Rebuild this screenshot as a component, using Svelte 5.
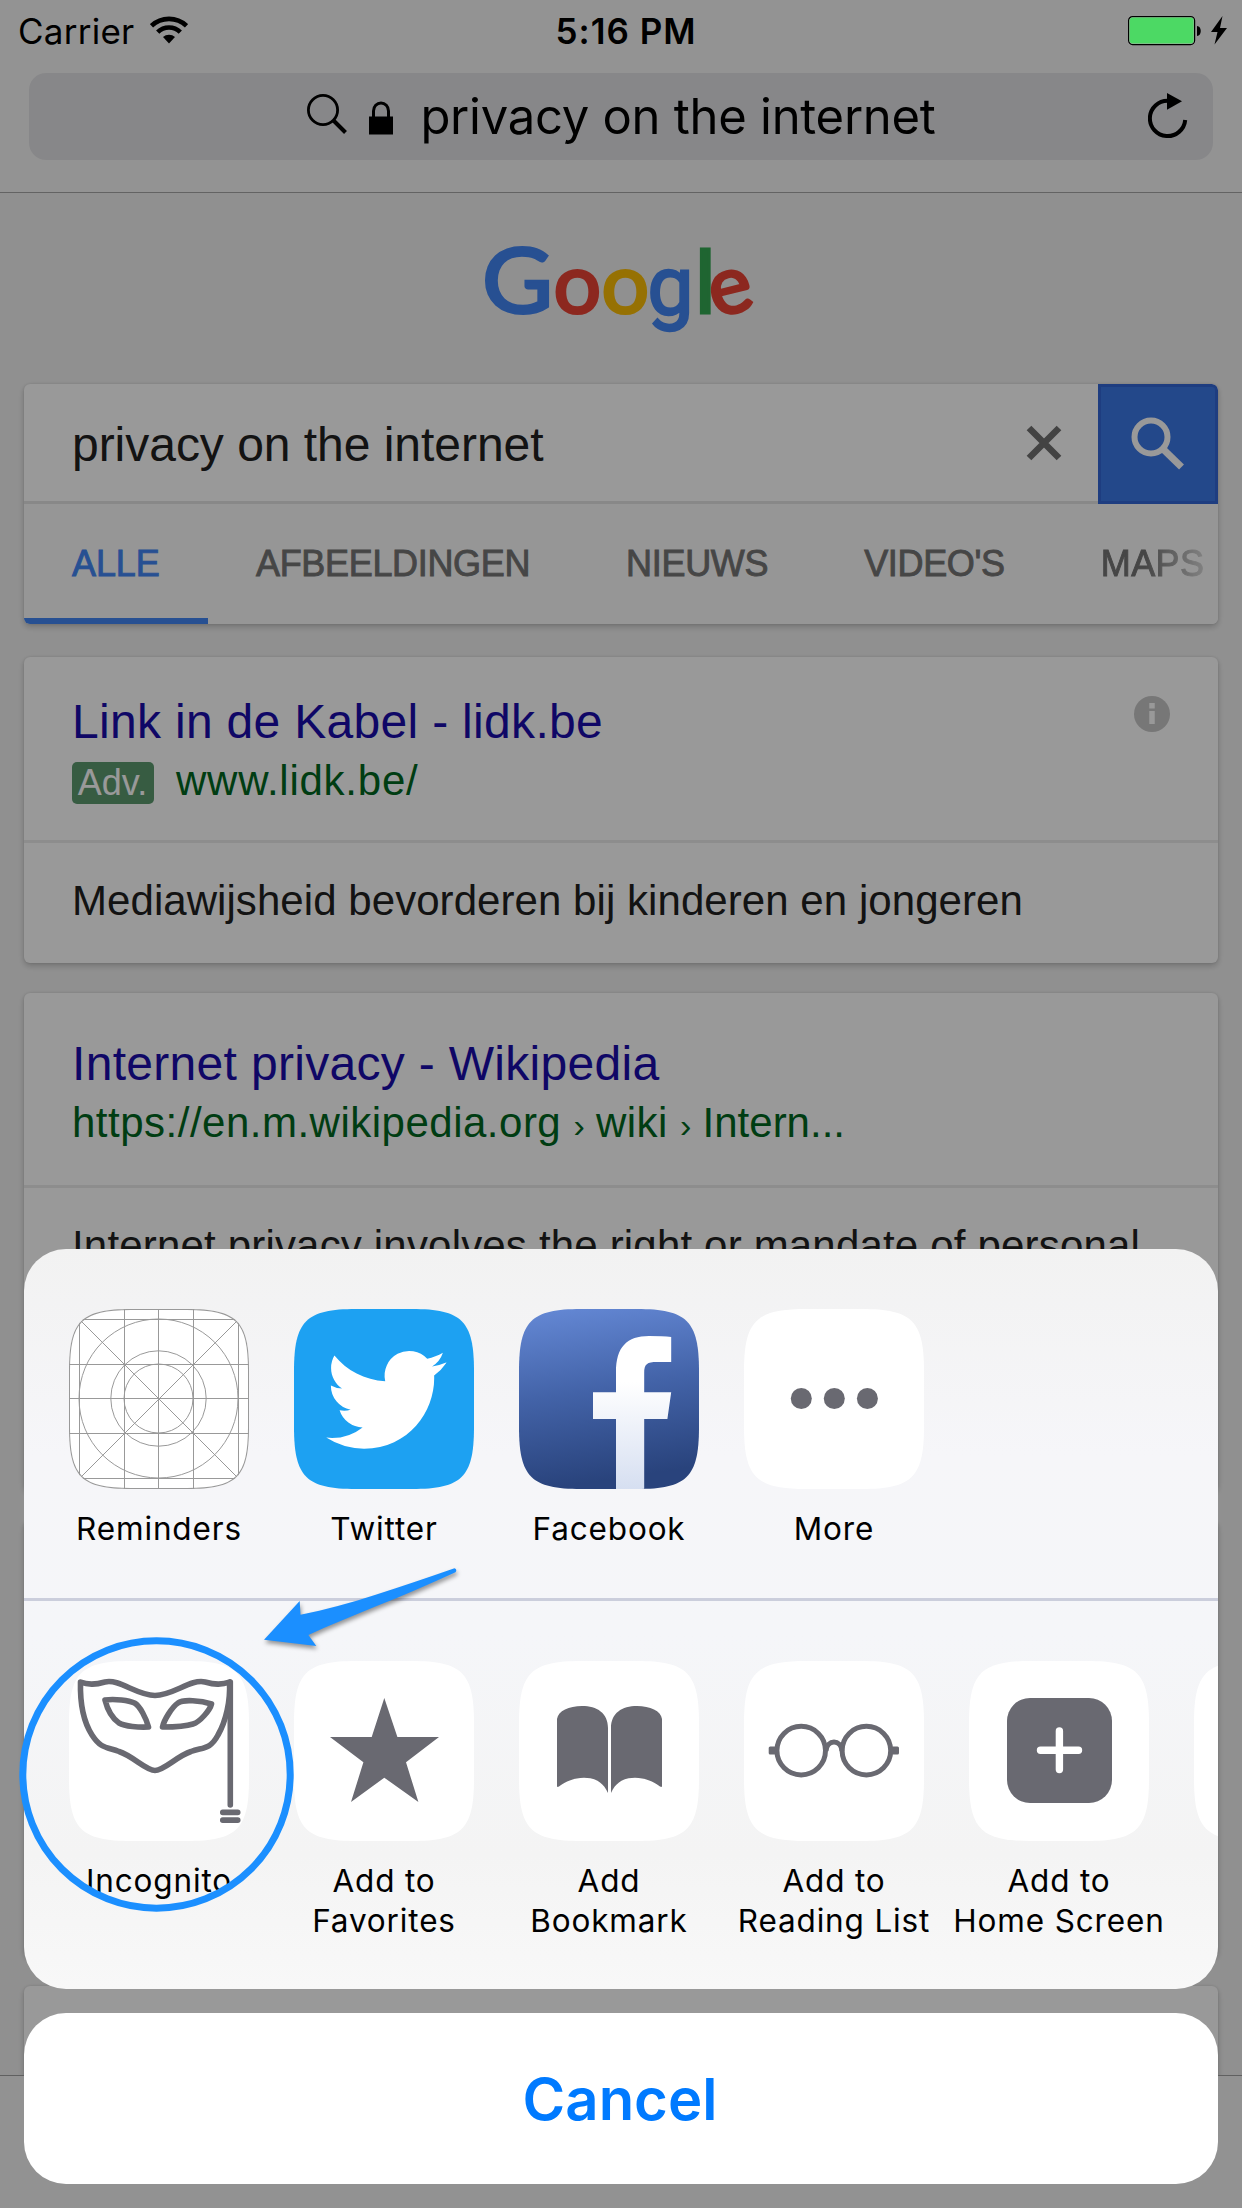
<script>
  const tabs = ['ALLE', 'AFBEELDINGEN', 'NIEUWS', "VIDEO'S", 'MAPS'];
  const apps = [
    { id: 'reminders', label: 'Reminders' },
    { id: 'twitter', label: 'Twitter' },
    { id: 'facebook', label: 'Facebook' },
    { id: 'more', label: 'More' }
  ];
  const actions = [
    { id: 'mask', lines: ['Incognito'] },
    { id: 'star', lines: ['Add to', 'Favorites'] },
    { id: 'book', lines: ['Add', 'Bookmark'] },
    { id: 'glasses', lines: ['Add to', 'Reading List'] },
    { id: 'plus', lines: ['Add to', 'Home Screen'] },
    { id: 'blank', lines: [] }
  ];
  const gridLines = [10.5, 55.5, 89.5, 124.5, 169.5];
</script>

{#snippet icon(id)}
  <svg class="tile" viewBox="0 0 180 180">
    <defs>
      <linearGradient id="fbBack" x1="0" y1="0" x2="0.15" y2="1">
        <stop offset="0" stop-color="#6589d6" />
        <stop offset="0.5" stop-color="#4363a8" />
        <stop offset="1" stop-color="#29437c" />
      </linearGradient>
      <linearGradient id="fbMark" x1="0" y1="0" x2="0" y2="1">
        <stop offset="0.3" stop-color="#fff" />
        <stop offset="1" stop-color="#d6dff1" />
      </linearGradient>
      <clipPath id="tileClip"><path d="M0 62C0 12 12 0 62 0H118C168 0 180 12 180 62V118C180 168 168 180 118 180H62C12 180 0 168 0 118Z" /></clipPath>
    </defs>
    <g clip-path="url(#tileClip)">
      <rect width="180" height="180" fill={id === 'twitter' ? '#1da1f2' : id === 'facebook' ? 'url(#fbBack)' : '#fff'} />
      {#if id === 'reminders'}
        <g fill="none" stroke="#999" stroke-width="1">
          {#each gridLines as p}
            <path d="M{p} 0V180M0 {p}H180" />
          {/each}
          <path d="M10 10L170 170M170 10L10 170" />
          <circle cx="89.5" cy="89.5" r="79.5" />
          <circle cx="89.5" cy="89.5" r="47.7" />
          <circle cx="89.5" cy="89.5" r="34.5" />
          <path stroke-width="2" d="M0 62C0 12 12 0 62 0H118C168 0 180 12 180 62V118C180 168 168 180 118 180H62C12 180 0 168 0 118Z" />
        </g>
      {:else if id === 'twitter'}
        <path transform="translate(32.2 30.7) scale(5.01)" fill="#fff" d="M23.953 4.57a10 10 0 01-2.825.775 4.958 4.958 0 002.163-2.723c-.951.555-2.005.959-3.127 1.184a4.92 4.92 0 00-8.384 4.482C7.69 8.095 4.067 6.13 1.64 3.162a4.822 4.822 0 00-.666 2.475c0 1.71.87 3.213 2.188 4.096a4.904 4.904 0 01-2.228-.616v.06a4.923 4.923 0 003.946 4.827 4.996 4.996 0 01-2.212.085 4.936 4.936 0 004.604 3.417 9.867 9.867 0 01-6.102 2.105c-.39 0-.779-.023-1.17-.067a13.995 13.995 0 007.557 2.209c9.053 0 13.998-7.496 13.998-13.985 0-.21 0-.42-.015-.63A9.935 9.935 0 0024 4.59z" />
      {:else if id === 'facebook'}
        <path fill="url(#fbMark)" d="M97 180V110H74V83.3H97V63C97 38 108 27 130 27Q144 27 152.2 28V53H138C128 53 125.2 55 125.2 64V83.3H152.2L148.4 110H125.2V180Z" />
      {:else if id === 'more'}
        <g fill="#696971">
          <circle cx="57.3" cy="89.5" r="10.5" /><circle cx="90.3" cy="89.5" r="10.5" /><circle cx="123.4" cy="89.5" r="10.5" />
        </g>
      {:else if id === 'mask'}
        <g fill="none" stroke="#696971" stroke-width="5.6" stroke-linejoin="round" stroke-linecap="round">
          <path d="M11.5 21C20 24.500 27 23.500 36 21C50 17.500 68 34.500 86 34.500C104 34.500 122 17.500 136 21C145 23.500 152 24.500 160.500 21C161.500 40 157 60 149 74C141 89 134 86 122 90.500C108 95 95 109.500 86 109.500C77 109.500 64 95 50 90.500C38 86 32 88 23 74C14 60 11 40 11.500 21Z" />
          <path d="M161.300 21V144" />
          <path d="M36 39C46 37.500 60 39.500 65.500 42C71 45 77 57 79.500 66C70 66.500 56 65.500 50 62C43 57 38 47 36 39Z" />
          <path d="M93.500 66C95 59 103 46 109 42C114 38 132 39.500 142.500 43C141 49 131 61 124 63C115 66 103 66 93.500 66Z" />
        </g>
        <rect x="151" y="148.500" width="20.500" height="5.800" rx="2.700" fill="#696971" />
        <rect x="151" y="156.200" width="20.500" height="5.800" rx="2.700" fill="#696971" />
      {:else if id === 'star'}
        <path fill="#696971" d="M90.300 37L103.400 76H145L112 101.300L124.400 141L90.300 116.700L57 141L69.400 101.300L36 76H77.700Z" />
      {:else if id === 'book'}
        <g fill="#696971">
          <path d="M38 58C39 50 50 45 63 45C78 45 89 52 89 67V132C84 121 76 116.700 65 116.700C53 116.700 45 122 40 125.500Q38 126.500 38 125Z" />
          <path d="M143 58C142 50 131 45 118 45C103 45 92 52 92 67V132C97 121 105 116.700 116 116.700C128 116.700 136 122 141 125.500Q143 126.500 143 125Z" />
        </g>
      {:else if id === 'glasses'}
        <g fill="none" stroke="#696971" stroke-width="5">
          <circle cx="57.200" cy="89.600" r="24.300" /><circle cx="122.400" cy="89.600" r="24.300" />
          <path d="M82 90C83 78 97 78 98 90" />
        </g>
        <rect x="24.700" y="85.500" width="8" height="8" rx="1.500" fill="#696971" />
        <rect x="147" y="85.500" width="8" height="8" rx="1.500" fill="#696971" />
      {:else if id === 'plus'}
        <rect x="38" y="37" width="105" height="105" rx="23" fill="#696971" />
        <path d="M90.400 70V108.500M71.500 89.300H109.500" stroke="#fff" stroke-width="7.400" stroke-linecap="round" />
      {/if}
    </g>
  </svg>
{/snippet}

<div class="screen">
  <header class="chrome">
    <div class="status">
      <div class="carrier">
        <span>Carrier</span>
        <svg class="wifi" viewBox="0 0 38 28">
          <g fill="none" stroke="#000" stroke-width="4.600">
            <path d="M1.500 9.800A25.500 25.500 0 0 1 36.500 9.800" />
            <path d="M7.700 16.200A16 16 0 0 1 30.300 16.200" />
          </g>
          <path d="M13 21A9 9 0 0 1 25 21L19 27.500Z" />
        </svg>
      </div>
      <span class="time">5:16 PM</span>
      <svg class="battery" viewBox="0 0 100 30">
        <rect x="0.600" y="0.600" width="66" height="28" rx="4" fill="#aaa" stroke="#000" stroke-width="1.200" />
        <rect x="1.600" y="1.600" width="64" height="26" rx="3" fill="#4cd964" />
        <path d="M69 10C74 10 74 20 69 20Z" />
        <path d="M94.500 0L83 16H89.500L86.500 28.500L99 12H92Z" />
      </svg>
    </div>
    <div class="address">
      <div></div>
      <div class="query">
        <svg class="glass" viewBox="0 0 40 42">
          <circle cx="16" cy="16" r="14.600" fill="none" stroke="#000" stroke-width="2.800" />
          <path d="M26.500 26.500L38.500 38.500" stroke="#000" stroke-width="4" />
        </svg>
        <svg class="lock" viewBox="0 0 24 34">
          <path d="M4.500 17V10A7.500 8 0 0 1 19.500 10V17" fill="none" stroke="#000" stroke-width="3" />
          <rect y="15.500" width="24" height="18" />
        </svg>
        <span>privacy on the internet</span>
      </div>
      <svg class="reload" viewBox="0 0 40 46">
        <path d="M20 7.700A17.700 17.700 0 1 0 37.200 27" fill="none" stroke="#000" stroke-width="4" />
        <path d="M19 0L34 8.300L19 16.800Z" />
      </svg>
    </div>
  </header>

  <div class="brand">
    <svg class="logo" viewBox="0 0 290 110">
      <text class="lt blue" x="6" y="78" font-size="91" textLength="71" lengthAdjust="spacingAndGlyphs">G</text>
      <text class="lt red" x="77.500" y="78" font-size="84">o</text>
      <text class="lt yellow" x="125.500" y="78" font-size="84">o</text>
      <text class="lt g blue" x="171.500" y="79" font-size="82">g</text>
      <text class="lt green" x="219" y="77.500" font-size="87">l</text>
      <text class="lt red" x="233.500" y="78" font-size="81" transform="rotate(-14 255 58)">e</text>
    </svg>
  </div>

  <main>
    <section class="card search">
      <div class="row">
        <div class="field">
          <span>privacy on the internet</span>
          <svg class="clear" viewBox="0 0 36 36"><path d="M3 3L33 33M33 3L3 33" stroke="#717171" stroke-width="6.600" /></svg>
        </div>
        <div class="go">
          <svg viewBox="0 0 54 54">
            <circle cx="20" cy="20" r="16.500" fill="none" stroke="#fff" stroke-width="6" />
            <path d="M33 33L50.500 50" stroke="#fff" stroke-width="7" />
          </svg>
        </div>
      </div>
      <nav>
        {#each tabs as tab, i}
          <span class="tab" class:active={i === 0}>{tab}</span>
        {/each}
      </nav>
    </section>

    <section class="card ad">
      <div class="head">
        <div class="title">Link in de Kabel - lidk.be</div>
        <div class="url"><span class="badge">Adv.</span><span>www.lidk.be/</span></div>
        <svg class="info" viewBox="0 0 36 36">
          <circle cx="18" cy="18" r="18" fill="#c6c6c6" />
          <path d="M18 7V12.500M18 15V28" stroke="#fff" stroke-width="5.500" />
        </svg>
      </div>
      <p class="d1">Mediawijsheid bevorderen bij kinderen en jongeren</p>
    </section>

    <section class="card result">
      <div class="head">
        <div class="title">Internet privacy - Wikipedia</div>
        <div class="url wiki"><span>https://en.m.wikipedia.org <i>›</i> wiki <i>›</i> <b>Intern...</b></span></div>
      </div>
      <p class="d2">Internet privacy involves the right or mandate of personal</p>
    </section>
    <section class="card third"></section>
    <section class="card fourth"></section>
  </main>
  <footer class="toolbar"></footer>

  <div class="dim"></div>

  <div class="modal">
    <div class="sheet">
      <div class="apps">
        {#each apps as app}
          <div class="item">{@render icon(app.id)}<span>{app.label}</span></div>
        {/each}
      </div>
      <div class="apps actions">
        {#each actions as action}
          <div class="item">
            {@render icon(action.id)}
            {#each action.lines as line}<span>{line}</span>{/each}
          </div>
        {/each}
      </div>
    </div>
    <button class="cancel">Cancel</button>
  </div>

  <svg class="callout" viewBox="0 0 480 360">
    <circle cx="156.500" cy="214.500" r="133.700" fill="none" stroke="#1b8fff" stroke-width="7" />
    <path class="arrow" d="M454.500 8.300Q457.500 9.500 455.500 12.300C400 38 350 56 308.400 75L316.300 86L264 79.700L299.700 41L300.500 54.700C350 45 400 27 454.500 8.300Z" />
  </svg>
</div>

<style>
  :global(body) { margin: 0; }
  .screen {
    position: relative;
    width: 1242px;
    height: 2208px;
    overflow: hidden;
    display: flex;
    flex-direction: column;
    background: #f1f1f1;
    font-family: "Liberation Sans", Arial, sans-serif;
    color: #212121;
  }
  svg { display: block; flex: none; }

  .chrome {
    box-sizing: border-box;
    height: 193px;
    background: #f6f6f6;
    border-bottom: 1px solid #a6a6a6;
    font-family: Inter, sans-serif;
    color: #000;
    flex: none;
  }
  .status {
    display: grid;
    grid-template-columns: 1fr auto 1fr;
    align-items: center;
    height: 62px;
    padding: 0 14px 0 18px;
    font-size: 35px;
    line-height: 62px;
  }
  .carrier { display: flex; align-items: center; gap: 16px; letter-spacing: 0.25px; }
  .wifi { width: 38px; height: 28px; margin-top: -2px; }
  .time { font-weight: 600; letter-spacing: 1px; padding-left: 6px; }
  .battery { position: relative; z-index: 3; width: 100px; height: 30px; justify-self: end; }
  .address {
    display: grid;
    grid-template-columns: 1fr auto 1fr;
    align-items: center;
    height: 87px;
    margin: 11px 29px 0;
    padding: 0 25px 0 26px;
    border-radius: 17px;
    background: #e2e2e5;
  }
  .query { display: flex; align-items: center; font-size: 49px; letter-spacing: -0.27px; line-height: 85px; padding-bottom: 1px; }
  .glass { width: 40px; height: 42px; margin: -2px 22px 0 0; }
  .lock { width: 24px; height: 34px; margin: 4px 27px 0 0; }
  .reload { width: 40px; height: 46px; justify-self: end; margin-top: -2px; }

  .brand { height: 191px; display: flex; justify-content: center; padding-top: 42px; box-sizing: border-box; flex: none; }
  .logo { width: 290px; height: 110px; overflow: visible; }
  .lt { font-family: Lato, sans-serif; stroke-width: 3px; }
  .g { font-family: Roboto, sans-serif; stroke-width: 2.4px; }
  .blue { fill: #4285f4; stroke: #4285f4; }
  .red { fill: #ea4335; stroke: #ea4335; }
  .yellow { fill: #fbbc05; stroke: #fbbc05; }
  .green { fill: #34a853; stroke: #34a853; }

  main { flex: 1; display: flex; flex-direction: column; padding: 0 24px; min-height: 0; overflow: hidden; margin-top: -8px; padding-top: 8px; }
  .card {
    background: #fff;
    border-radius: 6px;
    box-shadow: 0 3px 6px rgba(0, 0, 0, 0.2), 0 0 3px rgba(0, 0, 0, 0.1);
    flex: none;
  }
  .search { height: 240px; overflow: hidden; margin-bottom: 33px; }
  .row { display: flex; height: 120px; }
  .field {
    flex: 1;
    display: flex;
    align-items: center;
    justify-content: space-between;
    box-sizing: border-box;
    padding: 4px 36px 0 48px;
    border-bottom: 3px solid #e3e3e3;
    font-size: 48px;
    letter-spacing: -0.03px;
  }
  .clear { width: 36px; height: 36px; margin-top: -4px; }
  .go { box-sizing: border-box; width: 120px; border: 3px solid #3367d6; border-radius: 0 6px 0 0; background: #3b78e7; padding: 30px 0 0 30px; }
  .go svg { width: 54px; height: 54px; }
  nav {
    display: flex;
    height: 120px;
    background: #fafafa;
    font-size: 36px;
    line-height: 119px;
    letter-spacing: -0.33px;
    color: #757575;
    -webkit-text-stroke: 0.9px;
  }
  .tab { padding: 0 48px; flex: none; box-sizing: border-box; height: 120px; }
  .tab.active { width: 184px; letter-spacing: -0.1px; color: #4285f4; border-bottom: 6px solid #4285f4; }
  .tab:last-child { letter-spacing: 0.4px; -webkit-mask-image: linear-gradient(to right, #000 92px, transparent 172px); mask-image: linear-gradient(to right, #000 92px, transparent 172px); }

  .head { position: relative; box-sizing: border-box; padding: 36px 48px 0; height: 186px; border-bottom: 3px solid #ebebeb; }
  .title { font-size: 48px; line-height: 57px; letter-spacing: 0.31px; color: #1a0dab; }
  .url { display: flex; align-items: center; gap: 22px; height: 61px; font-size: 42px; letter-spacing: 0.75px; color: #006621; }
  .wiki { letter-spacing: 0.5px; }
  .wiki i { font-style: normal; font-size: 34px; letter-spacing: -1px; }
  .wiki b { font-weight: 400; letter-spacing: 0; }
  .badge { width: 82px; height: 42px; margin-top: 5px; border-radius: 5px; background: #5c996f; color: #fff; text-align: center; font-size: 36px; line-height: 41px; letter-spacing: 0; text-indent: -1px; }
  .info { position: absolute; right: 48px; top: 39px; width: 36px; height: 36px; }
  p { margin: 0; padding: 0 48px; font-size: 42px; line-height: 115px; white-space: nowrap; }
  .d1 { letter-spacing: 0.06px; }
  .d2 { letter-spacing: 0.18px; }
  .ad { height: 306px; margin-bottom: 30px; }
  .result { height: 497px; margin-bottom: 30px; }
  .result .head { height: 195px; padding-top: 42px; }
  .third { height: 436px; margin-bottom: 30px; }
  .fourth { height: 200px; }
  .toolbar { height: 133px; box-sizing: border-box; border-top: 1px solid #a0a0a0; background: #f4f4f4; flex: none; }

  .dim { position: absolute; inset: 0; background: rgba(0, 0, 0, 0.4); z-index: 2; }

  .modal {
    position: absolute;
    inset: auto 24px 24px;
    z-index: 4;
    display: flex;
    flex-direction: column;
    gap: 24px;
    font-family: Inter, sans-serif;
    color: #000;
  }
  .sheet { height: 740px; border-radius: 42px; overflow: hidden; background: linear-gradient(#f2f2f2, #f6f6f9 28%, #f5f6f9 52%, #f4f4f4 82%, #f8f8f8); }
  .apps { display: flex; gap: 45px; box-sizing: border-box; height: 352px; padding: 60px 45px 0; border-bottom: 3px solid #cbcedc; }
  .actions { height: 388px; border-bottom: 0; }
  .item { width: 180px; flex: none; display: flex; flex-direction: column; align-items: center; font-size: 31.5px; line-height: 39.5px; letter-spacing: 0.85px; white-space: nowrap; }
  .tile { width: 180px; height: 180px; margin-bottom: 20px; }
  .cancel {
    height: 171px;
    border: 0;
    border-radius: 42px;
    background: #fff;
    color: #007aff;
    font: 600 58px/171px Inter, sans-serif;
    padding: 1px 2px 0 0;
  }
  .callout { position: absolute; left: 0; top: 1560px; width: 480px; height: 360px; z-index: 5; }
  .arrow { fill: #1b8fff; filter: drop-shadow(1px 3px 2px rgba(0, 0, 0, 0.4)); }
</style>
